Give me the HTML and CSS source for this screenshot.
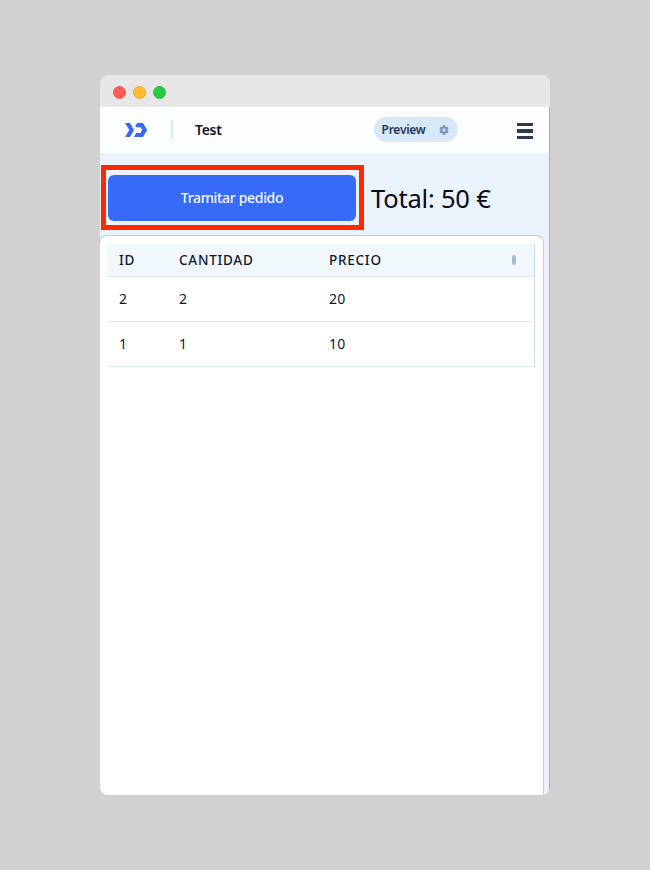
FILE: index.html
```html
<!DOCTYPE html>
<html lang="es">
<head>
<meta charset="utf-8">
<title>Test</title>
<link rel="stylesheet" href="styles.css">
</head>
<body>
<div class="window">
  <div class="titlebar"><i class="dot red"></i><i class="dot yellow"></i><i class="dot green"></i></div>
  <div class="app">
    <header class="nav">
      <svg class="logo" width="24" height="14" viewBox="0 0 24 14" fill="#3869f6"><path d="M0 0H5L9 7 5 14H0L4.3 7ZM12.2 0H18L22.2 7 18 14H9L11.2 10H15.4L17.2 7 15.6 4.2H11.6L10.2 3Z"/></svg>
      <span class="divider"></span>
      <span class="title">Test</span>
      <div class="preview"><span class="preview-label">Preview</span>
        <svg width="10" height="10" viewBox="0 0 10 10"><circle cx="5" cy="5" r="2.6" fill="none" stroke="#7a97c1" stroke-width="2.2"/><path d="M5 .3V2M5 8V9.7M.9 2.7 2.4 3.5M7.6 6.5 9.1 7.3M.9 7.3 2.4 6.5M7.6 3.5 9.1 2.7" stroke="#7a97c1" stroke-width="2.4"/></svg>
      </div>
      <div class="menu"><i></i><i class="mid"></i><i></i></div>
    </header>
    <div class="actions">
      <div class="highlight"><button class="submit"><span class="submit-label">Tramitar pedido</span></button></div>
      <div class="total">Total: 50 €</div>
    </div>
    <main class="panel">
      <div class="table">
        <div class="row head"><span>ID</span><span>CANTIDAD</span><span>PRECIO</span><i class="handle"></i></div>
        <div class="row"><span>2</span><span>2</span><span>20</span></div>
        <div class="row"><span>1</span><span>1</span><span>10</span></div>
      </div>
    </main>
  </div>
</div>
</body>
</html>
```
FILE: styles.css
```css
* { box-sizing: border-box; }
body { margin: 0; height: 870px; padding: 75px 100px; background: #d1d1d1; color: #0e1830; font-family: "Noto Sans", sans-serif; }
.window { width: 450px; height: 720px; border-radius: 8px; overflow: hidden; display: flex; flex-direction: column; }
.titlebar { height: 32px; flex: none; background: #e7e7e7; display: flex; align-items: center; gap: 7px; padding: 2px 0 0 13px; }
.dot { width: 13px; height: 13px; border-radius: 50%; }
.red { background: #ff5f57; border: 1px solid #ed5852; }
.yellow { background: #ffbd2e; border: 1px solid #e6aa35; }
.green { background: #28ca42; border: 1px solid #2bb742; }
.app { flex: 1; display: flex; flex-direction: column; background: #eaf2fc; border-right: 1px solid #a9b0bd; }
.nav { height: 46px; flex: none; background: #fbfdff; display: flex; align-items: center; padding-left: 25px; }
.logo { display: block; }
.divider { width: 2px; height: 19px; background: #d8e8f8; margin: -2px 22px 0 22px; }
.title { width: 179px; font-size: 14px; font-weight: 600; letter-spacing: -.3px; line-height: 20px; }
.preview { width: 84px; height: 25px; margin-top: -1px; border-radius: 13px; background: #d7e8f8; display: flex; align-items: center; justify-content: space-between; padding: 0 9px 0 7.5px; color: #27365a; }
.preview-label { font-size: 12px; font-weight: 600; letter-spacing: -.25px; }
.menu { width: 16px; margin: 2px 0 0 59px; display: flex; flex-direction: column; gap: 3px; }
.menu i { height: 3px; background: #303950; }
.menu .mid { height: 4px; }
.actions { height: 82px; flex: none; display: flex; align-items: flex-start; padding: 12px 0 0 1px; }
.highlight { width: 263px; height: 65px; border: 5px solid #ff2800; padding: 5px 3px 4px 2px; }
.submit { display: flex; align-items: center; justify-content: center; width: 248px; height: 46px; border: 0; border-radius: 6px; background: #376af6; color: #f5f8ff; font: 500 14px "Noto Sans", sans-serif; letter-spacing: -.32px; }
.submit-label { margin-top: -2px; }
.total { margin-left: 7px; font-size: 25.5px; letter-spacing: -.2px; line-height: 36px; padding-top: 15px; color: #060b18; white-space: nowrap; }
.panel { flex: 1; width: 445px; margin-left: -1px; background: #fff; border: 1px solid #b4d0ee; border-bottom: 0; border-radius: 8px 8px 0 0; padding: 8px 8px 0 7px; }
.table { width: 428px; border-right: 1px solid #c7dbf1; }
.row { height: 45px; display: grid; grid-template-columns: 60px 150px 183px 4px; align-items: center; padding: 0 0 2px 12px; border-bottom: 1px solid #d9e8f4; font-size: 14px; letter-spacing: .3px; }
.head { height: 33px; padding-bottom: 0; background: #f1f8fc; font-size: 13.5px; font-weight: 500; letter-spacing: .75px; }
.handle { height: 10px; width: 4px; border-radius: 2px; background: #a4bbd9; }
```
